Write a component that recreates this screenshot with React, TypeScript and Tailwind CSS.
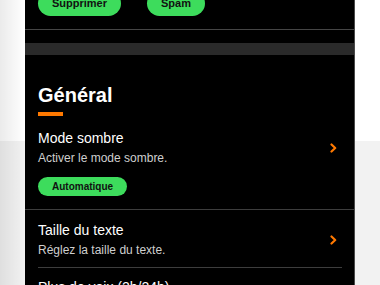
import React from "react";

function Chevron() {
  return (
    <svg width="7" height="10" viewBox="0 0 7 10" fill="none" className="shrink-0">
      <path d="M1.5 1.5 L5.2 5 L1.5 8.5" stroke="#ff7900" strokeWidth="2.2" strokeLinecap="round" strokeLinejoin="round" />
    </svg>
  );
}

export default function App() {
  return (
    <div
      className="flex h-[285px] w-[380px] overflow-hidden bg-[linear-gradient(to_bottom,#ffffff_141px,#f2f2f2_141px)]"
      style={{ fontFamily: '"Liberation Sans", Arial, Helvetica, sans-serif' }}
    >
      <div className="w-[25px] shrink-0 bg-gradient-to-r from-black/[0.08] to-transparent" />
      <div className="block w-[330px] shrink-0 border-r border-[#4a4a4a] bg-black">
        <div className="relative border-b border-[#454545] pb-[13px]">
          <div className="-mt-[9px] flex gap-[26px] px-[13px]">
            <span className="flex h-[25px] items-center rounded-full bg-[#3ddc5c] px-[14px] text-[11px] font-bold text-[#111]">
              Supprimer
            </span>
            <span className="flex h-[25px] items-center rounded-full bg-[#3ddc5c] px-[14px] text-[11px] font-bold text-[#111]">
              Spam
            </span>
          </div>
          <div className="absolute left-0 right-0 top-[5px] h-px bg-[#4a4a4a]" />
        </div>
        <div className="h-[13px]" />
        <div className="h-[12px] bg-[#2a2a2a]" />
        <div className="px-[13px] pt-[28px]">
          <h2 className="text-[20px] font-bold leading-[24px] text-white">Général</h2>
          <div className="mt-[5px] h-[4px] w-[25px] bg-[#ff7900]" />
        </div>
        <div className="border-b border-[#3d3d3d] pb-[13px] pl-[13px] pr-[17px] pt-[13px]">
          <div className="flex items-center justify-between">
            <div>
              <div className="text-[14px] leading-[18px] text-white">Mode sombre</div>
              <div className="mt-[3px] text-[12px] leading-[16px] text-[#cfcfcf]">Activer le mode sombre.</div>
            </div>
            <Chevron />
          </div>
          <div className="mt-[11px] flex h-[19px] w-fit items-center rounded-full bg-[#3ddc5c] px-[14px] text-[10px] font-bold text-[#111]">
            Automatique
          </div>
        </div>
        <div className="pl-[13px] pr-[12px]">
          <div className="flex items-center justify-between border-b border-[#3d3d3d] pb-[9px] pr-[5px] pt-[11px]">
            <div>
              <div className="text-[14px] leading-[18px] text-white">Taille du texte</div>
              <div className="mt-[3px] text-[12px] leading-[16px] text-[#cfcfcf]">Réglez la taille du texte.</div>
            </div>
            <Chevron />
          </div>
          <div className="pt-[10px]">
            <div className="text-[14px] leading-[18px] text-white">Plus de voix (2h/24h)</div>
          </div>
        </div>
      </div>
    </div>
  );
}
